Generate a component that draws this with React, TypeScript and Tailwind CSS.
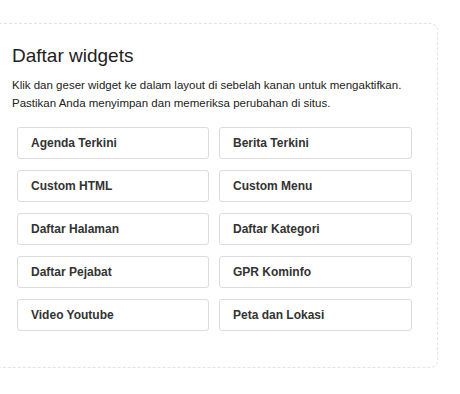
import React from "react";

const widgets = [
  "Agenda Terkini",
  "Berita Terkini",
  "Custom HTML",
  "Custom Menu",
  "Daftar Halaman",
  "Daftar Kategori",
  "Daftar Pejabat",
  "GPR Kominfo",
  "Video Youtube",
  "Peta dan Lokasi",
];

export default function App() {
  return (
    <div className="w-[460px] h-[394px] bg-white overflow-hidden" style={{ fontFamily: '"Liberation Sans", Arial, sans-serif' }}>
      <div className="mt-[23px] -ml-[9px] w-[447px] h-[345px] border border-dashed border-[#e3e3e3] rounded-[8px] pl-[20px] pr-[25px] pt-[20px]">
        <h2 className="text-[19px] leading-[24px] text-[#222] font-normal">Daftar widgets</h2>
        <p className="mt-[8px] text-[11.5px] leading-[18px] text-[#222]">
          Klik dan geser widget ke dalam layout di sebelah kanan untuk mengaktifkan.
          <br />
          Pastikan Anda menyimpan dan memeriksa perubahan di situs.
        </p>
        <div className="mt-[15px] ml-[5px] grid grid-cols-[192px_193px] gap-x-[10px] gap-y-[11px]">
          {widgets.map((w) => (
            <div
              key={w}
              className="h-[32px] border border-[#dcdcdc] rounded-[3px] flex items-center pl-[13px] text-[12px] font-bold text-[#333]"
            >
              {w}
            </div>
          ))}
        </div>
      </div>
    </div>
  );
}
